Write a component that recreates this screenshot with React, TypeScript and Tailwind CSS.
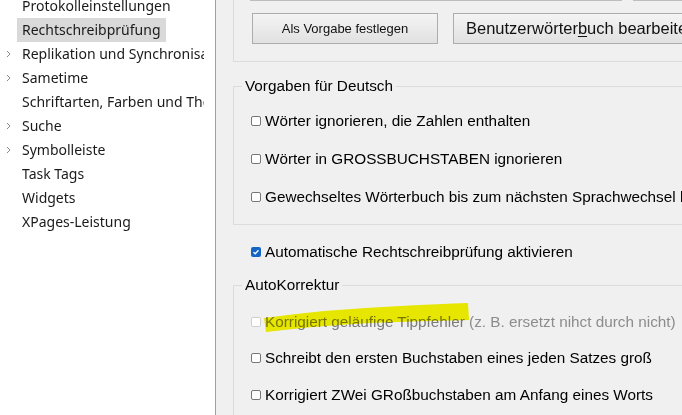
import React from 'react';

const navItems = [
    { label: 'Protokolleinstellungen', chevron: false },
    { label: 'Rechtschreibprüfung', chevron: false, selected: true },
    { label: 'Replikation und Synchronisation', chevron: true },
    { label: 'Sametime', chevron: true },
    { label: 'Schriftarten, Farben und Themen', chevron: false },
    { label: 'Suche', chevron: true },
    { label: 'Symbolleiste', chevron: true },
    { label: 'Task Tags', chevron: false },
    { label: 'Widgets', chevron: false },
    { label: 'XPages-Leistung', chevron: false },
];

function Chevron() {
    return (
        <svg width="5" height="8" viewBox="0 0 5 8" className="block">
            <path d="M1 1 L4 4 L1 7" fill="none" stroke="#8a8a8a" strokeWidth="1" />
        </svg>
    );
}

function CheckBox({ checked = false, disabled = false }: { checked?: boolean; disabled?: boolean }) {
    if (checked) {
        return (
            <span className="flex items-center justify-center w-[10px] h-[10px] rounded-[2px] bg-[#1466c4] shrink-0">
                <svg width="8" height="8" viewBox="0 0 8 8">
                    <path d="M1.5 4.2 L3.2 5.8 L6.5 2.2" fill="none" stroke="white" strokeWidth="1.3" />
                </svg>
            </span>
        );
    }
    return (
        <span
            className={`block w-[10px] h-[10px] rounded-[2px] border bg-white shrink-0 ${
                disabled ? 'border-[#cfcfcf]' : 'border-[#777777]'
            }`}
        />
    );
}

function Row({ children, checked, disabled, h = 'h-[38px]' }: { children: React.ReactNode; checked?: boolean; disabled?: boolean; h?: string }) {
    return (
        <div className={`flex items-center gap-[4px] pl-[17px] whitespace-nowrap ${h}`}>
            <CheckBox checked={checked} disabled={disabled} />
            <span className="leading-[18px]">{children}</span>
        </div>
    );
}

export default function App() {
    return (
        <div className="flex w-[682px] h-[415px] overflow-hidden bg-white text-black">
            {/* Navigation tree */}
            <aside
                className="w-[216px] shrink-0 border-r border-[#a0a0a0] bg-white overflow-hidden"
                style={{ fontFamily: '"Noto Sans", sans-serif' }}
            >
                <ul className="-mt-[6px] pr-[11px] text-[14px] text-[#1a1a1a]">
                    {navItems.map((item) => (
                        <li key={item.label} className="flex items-center h-[24px] whitespace-nowrap overflow-hidden">
                            <span className="flex items-center justify-center w-[17px] shrink-0 pr-[1px]">
                                {item.chevron && <Chevron />}
                            </span>
                            <span className={`px-[5px] leading-[24px] ${item.selected ? 'bg-[#d9d9d9]' : ''}`}>
                                {item.label}
                            </span>
                        </li>
                    ))}
                </ul>
            </aside>

            {/* Settings panel */}
            <main
                className="relative flex-1 min-w-0 bg-[#f0f0f0] pl-[17px] overflow-hidden"
                style={{ fontFamily: '"Liberation Sans", Arial, sans-serif' }}
            >
                <section className="h-[62px] border-l border-b border-[#dcdcdc] w-[600px]">
                    <div className="flex pl-[16px]">
                        <div className="w-[373px] h-px bg-[#bdbdbd]" />
                        <div className="ml-[11px] w-[200px] h-px bg-[#bdbdbd]" />
                    </div>
                    <div className="flex pl-[18px] mt-[12px] whitespace-nowrap">
                        <button className="w-[186px] h-[31px] border border-[#adadad] bg-linear-to-b from-[#f4f4f4] to-[#e1e1e1] text-[13px] text-[#111]">
                            Als Vorgabe festlegen
                        </button>
                        <button className="ml-[15px] w-[270px] shrink-0 h-[31px] border border-[#adadad] bg-linear-to-b from-[#f4f4f4] to-[#e1e1e1] text-[16.5px] text-left pl-[12px] text-[#111]">
                            Benutzerwörter<span className="underline underline-offset-2">b</span>uch bearbeiten
                        </button>
                    </div>
                </section>

                <fieldset className="mt-[15px] w-[600px] border-l border-t border-b border-[#dcdcdc] pb-[8px] text-[15.3px]">
                    <legend className="ml-[8px] px-[3px] text-[15.3px] leading-[18px]">Vorgaben für Deutsch</legend>
                    <div className="pt-[7px]">
                        <Row>Wörter ignorieren, die Zahlen enthalten</Row>
                        <Row>Wörter in GROSSBUCHSTABEN ignorieren</Row>
                        <Row>Gewechseltes Wörterbuch bis zum nächsten Sprachwechsel beibehalten</Row>
                    </div>
                </fieldset>

                <div className="mt-[8px] text-[15.3px]">
                    <div className="pl-[1px]">
                        <Row checked>Automatische Rechtschreibprüfung aktivieren</Row>
                    </div>
                </div>

                <fieldset className="mt-[5px] w-[600px] h-[200px] border-l border-t border-[#dcdcdc] text-[15.3px]">
                    <legend className="ml-[8px] px-[3px] text-[15.3px] leading-[18px]">AutoKorrektur</legend>
                    <div className="pt-[9px]">
                        <Row disabled h="h-[37px]">
                            <span className="text-[#7b7b7b]">
                                Korrigiert geläufige Tippfehler <span className="text-[#8c8c8c]">(z. B. ersetzt nihct durch nicht)</span>
                            </span>
                        </Row>
                        <Row h="h-[36px]">Schreibt den ersten Buchstaben eines jeden Satzes groß</Row>
                        <Row h="h-[37px]">Korrigiert ZWei GRoßbuchstaben am Anfang eines Worts</Row>
                    </div>
                </fieldset>

                {/* Yellow marker stroke */}
                <svg
                    className="absolute left-0 top-0 pointer-events-none mix-blend-multiply"
                    width="466"
                    height="415"
                    viewBox="216 0 466 415"
                >
                    <path
                        d="M264 318 Q 330 309 400 306 Q 440 304 468 303 L 469 320 Q 420 321 370 323 Q 315 326 266 332 Z"
                        fill="#f5f500"
                    />
                </svg>
            </main>
        </div>
    );
}
